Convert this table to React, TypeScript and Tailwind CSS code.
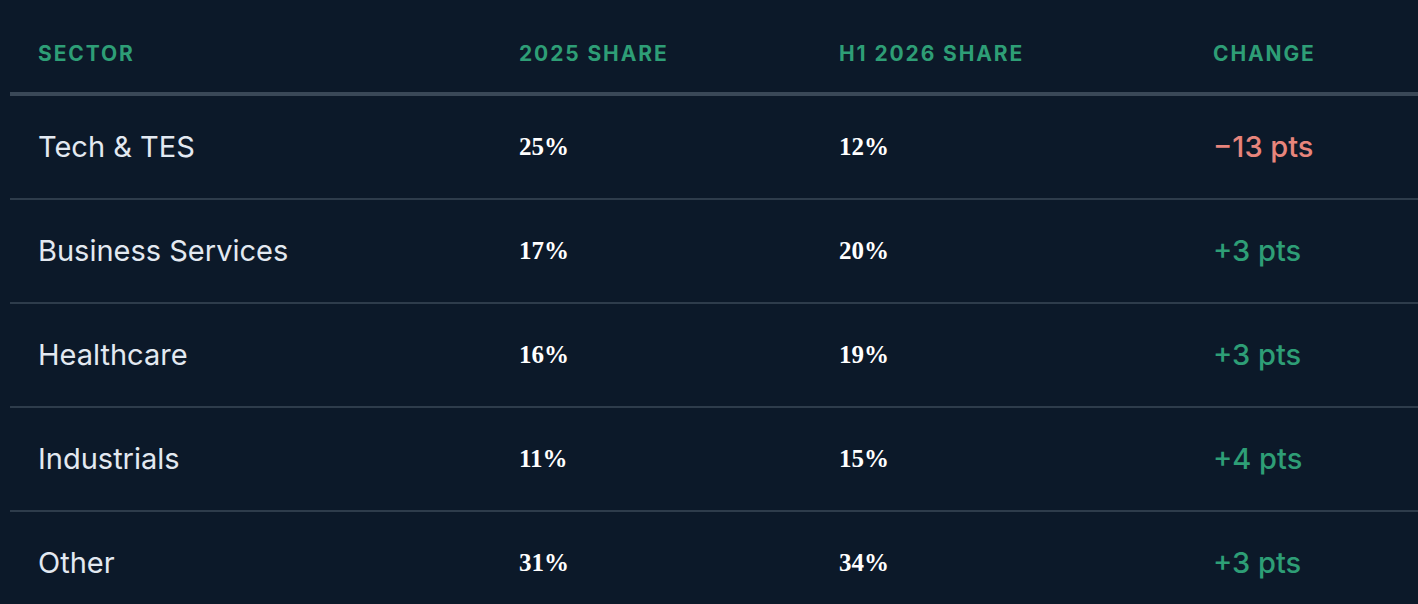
import React from 'react';

type Row = { sector: string; before: string; after: string; change: string; down?: boolean };

const ROWS: Row[] = [
  { sector: 'Tech & TES', before: '25%', after: '12%', change: '\u221213 pts', down: true },
  { sector: 'Business Services', before: '17%', after: '20%', change: '+3 pts' },
  { sector: 'Healthcare', before: '16%', after: '19%', change: '+3 pts' },
  { sector: 'Industrials', before: '11%', after: '15%', change: '+4 pts' },
  { sector: 'Other', before: '31%', after: '34%', change: '+3 pts' },
];

const COLS = 'grid grid-cols-[481px_320px_374px_1fr]';
const sans = "font-['Inter','Liberation_Sans',sans-serif]";
const serif = "font-['Liberation_Serif','DejaVu_Serif',serif]";

const App = () => {
  return (
    <div className={`min-h-screen w-full bg-[#0c1929] pl-[10px] ${sans}`}>
      {/* header */}
      <div className={`${COLS} border-b-[4px] border-[#3a4857] pt-[40px] pb-[24px]`}>
        {['Sector', '2025 Share', 'H1 2026 Share', 'Change'].map((h) => (
          <div
            key={h}
            className="pl-[28px] text-[21px] leading-[28px] font-bold uppercase tracking-[0.09em] text-[#2e9e76]"
          >
            {h}
          </div>
        ))}
      </div>

      {/* rows */}
      {ROWS.map((r) => (
        <div key={r.sector} className={`${COLS} h-[104px] items-center border-b-2 border-[#2e3c4b]`}>
          <div className="pl-[28px] text-[29px] text-[#e3e9f1]">{r.sector}</div>
          <div className={`pl-[28px] text-[25px] font-bold text-white oldstyle-nums ${serif}`}>{r.before}</div>
          <div className={`pl-[28px] text-[25px] font-bold text-white oldstyle-nums ${serif}`}>{r.after}</div>
          <div
            className={`pl-[28px] text-[29px] font-medium ${r.down ? 'text-[#e8857c]' : 'text-[#2e9e76]'}`}
          >
            {r.change}
          </div>
        </div>
      ))}
    </div>
  );
};

export default App;
